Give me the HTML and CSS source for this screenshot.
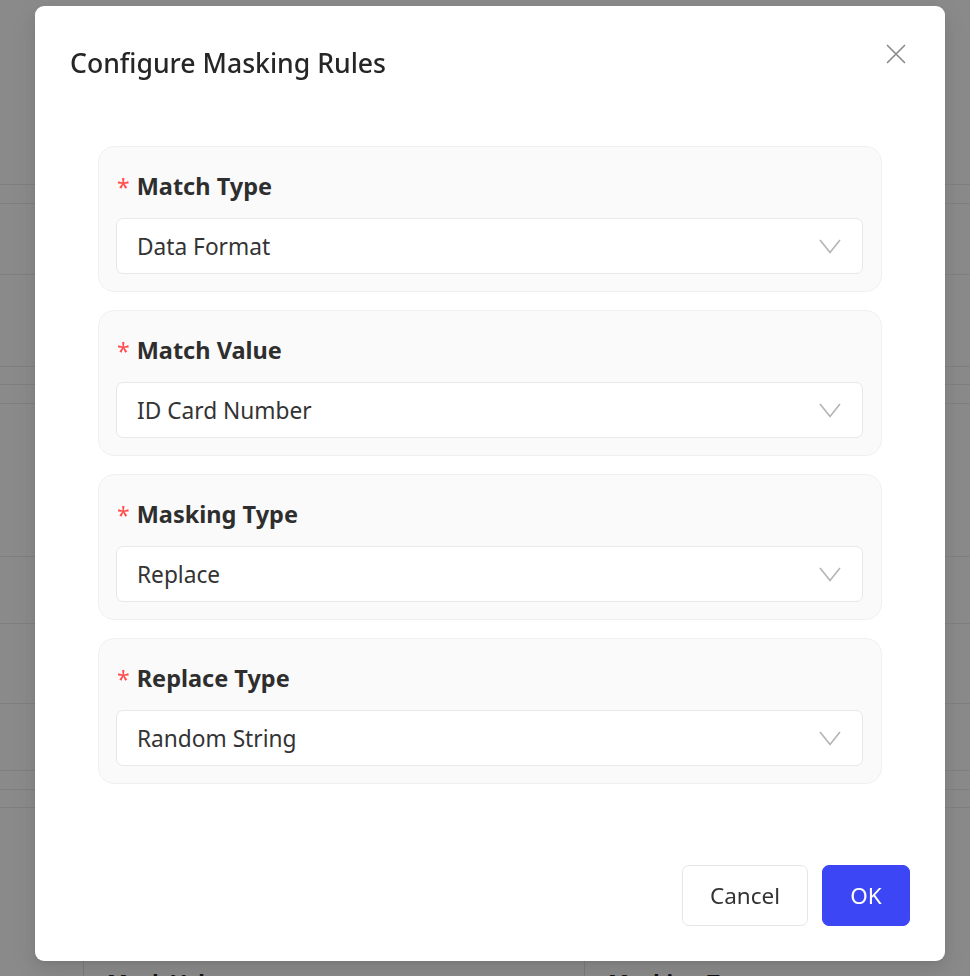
FILE: index.html
```html
<!DOCTYPE html>
<html lang="en">
<head>
<meta charset="utf-8">
<title>Configure Masking Rules</title>
<link rel="stylesheet" href="styles.css">
</head>
<body>
<div class="page">
  <div class="row r1"></div>
  <div class="row r2"></div>
  <div class="row r3"></div>
  <div class="row r4"></div>
  <div class="row r5"></div>
  <div class="row r6"></div>
  <div class="row r7"></div>
  <div class="row r8"></div>
  <div class="row r9"></div>
  <div class="row r10"></div>
  <div class="row r11"></div>
  <div class="row r12"></div>
  <div class="row r13"></div>
  <div class="thead">
    <div class="th th-first"></div>
    <div class="th th-mid">Mask Value</div>
    <div class="th th-last">Masking Type</div>
  </div>
</div>

<div class="overlay">
  <div class="modal">
    <div class="modal-header">
      <div class="modal-title">Configure Masking Rules</div>
      <button class="close-btn" aria-label="Close">
        <svg width="20" height="20" viewBox="0 0 20 20"><path d="M1.5 1.5 L18.5 18.5 M18.5 1.5 L1.5 18.5" stroke="#8c8c8c" stroke-width="1.7" fill="none" stroke-linecap="round"/></svg>
      </button>
    </div>
    <div class="modal-body">
      <div class="field-card">
        <div class="field-label"><span class="req">*</span>Match Type</div>
        <div class="select">
          <span class="select-value">Data Format</span>
          <svg class="chev" width="22" height="15" viewBox="0 0 22 15"><path d="M1 1 L11 13.5 L21 1" stroke="#b4b4b4" stroke-width="1.6" fill="none"/></svg>
        </div>
      </div>
      <div class="field-card">
        <div class="field-label"><span class="req">*</span>Match Value</div>
        <div class="select">
          <span class="select-value">ID Card Number</span>
          <svg class="chev" width="22" height="15" viewBox="0 0 22 15"><path d="M1 1 L11 13.5 L21 1" stroke="#b4b4b4" stroke-width="1.6" fill="none"/></svg>
        </div>
      </div>
      <div class="field-card">
        <div class="field-label"><span class="req">*</span>Masking Type</div>
        <div class="select">
          <span class="select-value">Replace</span>
          <svg class="chev" width="22" height="15" viewBox="0 0 22 15"><path d="M1 1 L11 13.5 L21 1" stroke="#b4b4b4" stroke-width="1.6" fill="none"/></svg>
        </div>
      </div>
      <div class="field-card">
        <div class="field-label"><span class="req">*</span>Replace Type</div>
        <div class="select">
          <span class="select-value">Random String</span>
          <svg class="chev" width="22" height="15" viewBox="0 0 22 15"><path d="M1 1 L11 13.5 L21 1" stroke="#b4b4b4" stroke-width="1.6" fill="none"/></svg>
        </div>
      </div>
    </div>
    <div class="modal-footer">
      <button class="btn btn-default">Cancel</button>
      <button class="btn btn-primary">OK</button>
    </div>
  </div>
</div>
</body>
</html>
```

FILE: styles.css
```css
html, body {
  margin: 0;
  padding: 0;
}
body {
  width: 970px;
  height: 976px;
  overflow: hidden;
  background: #ffffff;
  font-family: "Noto Sans", "Open Sans", sans-serif;
  color: #333333;
}
.page {
  display: flex;
  flex-direction: column;
}
.row {
  border-bottom: 1px solid #ebebeb;
  box-sizing: border-box;
}
.r1 { height: 185px; }
.r2 { height: 19px; }
.r3 { height: 71px; }
.r4 { height: 92px; }
.r5 { height: 18px; }
.r6 { height: 19px; }
.r7 { height: 153px; }
.r8 { height: 67px; }
.r9 { height: 80px; }
.r10 { height: 67px; }
.r11 { height: 19px; }
.r12 { height: 18px; }
.r13 { height: 148px; border-bottom: none; }
.thead {
  display: flex;
  height: 60px;
}
.th {
  box-sizing: border-box;
  padding: 10px 0 0 23px;
  font-size: 22px;
  font-weight: 700;
  color: #222;
  line-height: 30px;
}
.th-first { width: 84px; border-right: 1px solid #e4e4e4; padding: 0; }
.th-mid { width: 501px; border-right: 1px solid #e4e4e4; }
.th-last { flex: 1; }

.overlay {
  position: fixed;
  inset: 0;
  background: rgba(0, 0, 0, 0.46);
}
.modal {
  position: absolute;
  left: 35px;
  top: 6px;
  width: 910px;
  height: 955px;
  box-sizing: border-box;
  background: #ffffff;
  border-radius: 9px;
  box-shadow: 0 6px 16px rgba(0,0,0,0.08), 0 3px 6px -4px rgba(0,0,0,0.12), 0 9px 28px 8px rgba(0,0,0,0.05);
  display: flex;
  flex-direction: column;
  padding: 0 35px 35px 35px;
}
.modal-header {
  display: flex;
  justify-content: space-between;
  align-items: flex-start;
}
.modal-title {
  margin-top: 40px;
  font-family: "Noto Sans", "Open Sans", sans-serif;
  font-size: 26.6px;
  line-height: 34px;
  font-weight: 500;
  color: #262626;
}
.close-btn {
  margin-top: 33px;
  margin-right: -1px;
  width: 30px;
  height: 30px;
  padding: 0;
  border: none;
  background: transparent;
  display: flex;
  align-items: center;
  justify-content: center;
}
.modal-body {
  margin-top: 66px;
  display: flex;
  flex-direction: column;
  align-items: center;
  gap: 18px;
}
.field-card {
  width: 784px;
  box-sizing: border-box;
  background: #fafafa;
  border: 1px solid #f0f0f0;
  border-radius: 16px;
  padding: 24px 18px 17px 17px;
}
.field-label {
  font-size: 23.5px;
  line-height: 30px;
  font-weight: 700;
  color: #2e2e2e;
  display: flex;
  align-items: center;
  margin-bottom: 17px;
}
.req {
  color: #ff4d4f;
  font-weight: 400;
  font-size: 23px;
  margin-left: 1px;
  margin-right: 7px;
  position: relative;
  top: 1px;
}
.select {
  height: 56px;
  box-sizing: border-box;
  background: #ffffff;
  border: 1px solid #e8e8e8;
  border-radius: 7px;
  display: flex;
  align-items: center;
  justify-content: space-between;
  padding: 0 21px 0 20px;
}
.select-value {
  font-size: 22.7px;
  color: #333333;
}
.chev {
  display: block;
}
.modal-footer {
  margin-top: auto;
  display: flex;
  justify-content: flex-end;
  gap: 14px;
}
.btn {
  height: 61px;
  box-sizing: border-box;
  border-radius: 7px;
  font-family: "Noto Sans", "Open Sans", sans-serif;
  font-size: 22.5px;
  padding: 0;
}
.btn-default {
  width: 126px;
  background: #ffffff;
  border: 1px solid #e6e6e6;
  color: #333333;
}
.btn-primary {
  width: 88px;
  background: #3d46f5;
  border: 1px solid #3d46f5;
  color: #ffffff;
}
```
